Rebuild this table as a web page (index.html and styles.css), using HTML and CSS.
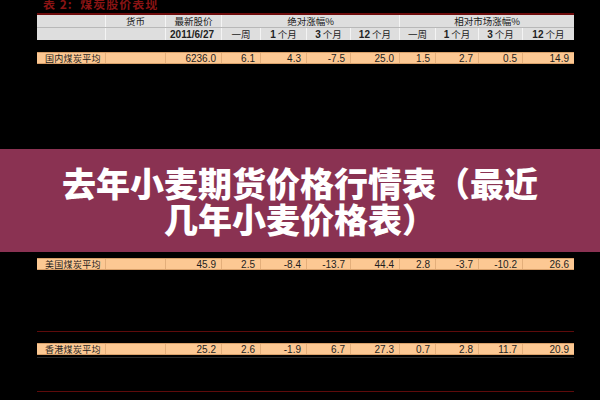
FILE: index.html
```html
<!DOCTYPE html>
<html lang="zh-CN">
<head>
<meta charset="utf-8">
<link rel="stylesheet" href="styles.css">
</head>
<body>
<div class="doc">
  <div class="title"><span>表 2:&nbsp; 煤炭股价表现</span></div>
  <div class="head">
    <div class="grid hrow r1">
      <div class="c"></div>
      <div class="c">货币</div>
      <div class="c">最新股价</div>
      <div class="c span4">绝对涨幅%</div>
      <div class="c span4">相对市场涨幅%</div>
    </div>
    <div class="grid hrow r2">
      <div class="c"></div>
      <div class="c"></div>
      <div class="c num"><b>2011/6/27</b></div>
      <div class="c">一周</div>
      <div class="c"><b>1</b> 个月</div>
      <div class="c"><b>3</b> 个月</div>
      <div class="c"><b>12</b> 个月</div>
      <div class="c">一周</div>
      <div class="c"><b>1</b> 个月</div>
      <div class="c"><b>3</b> 个月</div>
      <div class="c"><b>12</b> 个月</div>
    </div>
  </div>
  <div class="grid data first">
    <div class="c lbl">国内煤炭平均</div><div class="c"></div>
    <div class="c">6236.0</div><div class="c">6.1</div><div class="c">4.3</div><div class="c">-7.5</div><div class="c">25.0</div>
    <div class="c">1.5</div><div class="c">2.7</div><div class="c">0.5</div><div class="c">14.9</div>
  </div>
</div>
<div class="banner">
  <div class="line">去年小麦期货价格行情表（最近</div>
  <div class="line">几年小麦价格表）</div>
</div>
<div class="doc">
  <div class="grid data us">
    <div class="c lbl">美国煤炭平均</div><div class="c"></div>
    <div class="c">45.9</div><div class="c">2.5</div><div class="c">-8.4</div><div class="c">-13.7</div><div class="c">44.4</div>
    <div class="c">2.8</div><div class="c">-3.7</div><div class="c">-10.2</div><div class="c">26.6</div>
  </div>
  <div class="rule r-a"></div>
  <div class="grid data hk">
    <div class="c lbl">香港煤炭平均</div><div class="c"></div>
    <div class="c">25.2</div><div class="c">2.6</div><div class="c">-1.9</div><div class="c">6.7</div><div class="c">27.3</div>
    <div class="c">0.7</div><div class="c">2.8</div><div class="c">11.7</div><div class="c">20.9</div>
  </div>
  <div class="faint"></div>
  <div class="rule r-b"></div>
</div>
</body>
</html>
```

FILE: styles.css
```css
html, body {
  margin: 0;
  padding: 0;
}
body {
  background: #000;
  width: 600px;
  height: 400px;
  overflow: hidden;
  font-family: "Liberation Sans", "Noto Sans CJK SC", sans-serif;
  color: #1e1e1e;
}
.doc {
  margin-left: 37px;
  width: 537px;
}
.title {
  height: 13px;
  overflow: hidden;
  padding-left: 6px;
}
.title span {
  display: block;
  margin-top: -3px;
  font-family: "Noto Sans CJK SC", sans-serif;
  font-size: 12px;
  line-height: 14px;
  font-weight: 700;
  color: #8a1414;
  letter-spacing: 1px;
}
.grid {
  display: grid;
  grid-template-columns: 68px 60px 56px 39px 46px 44px 49px 36px 43px 44px 52px;
}
.head {
  background: #dedede;
  border-top: 2px solid #6e0c0c;
}
.hrow .c {
  height: 12px;
  line-height: 12px;
  text-align: center;
  font-family: "Noto Sans CJK SC", sans-serif;
  font-size: 9.5px;
  color: #222;
  border-left: 1px solid #f4f4f4;
  box-sizing: border-box;
}
.hrow .c:first-child {
  border-left: none;
}
.hrow .span4 {
  grid-column: span 4;
}
.r2 {
  border-top: 1px solid #b8b8b8;
}
.hrow .c b {
  font-family: "Liberation Sans", sans-serif;
  font-size: 10px;
}
.hrow .num {
  text-align: right;
  padding-right: 7px;
}
.data {
  background: #fcc893;
  border-top: 1px solid #d8a06a;
  border-bottom: 1px solid #d8a06a;
}
.data .c {
  height: 10px;
  line-height: 11px;
  font-size: 10px;
  text-align: right;
  padding-right: 5px;
  border-left: 1px solid #e3ae7a;
  color: #1e1e1e;
}
.data .c:first-child {
  border-left: none;
}
.data .lbl {
  text-align: left;
  padding-left: 8px;
  padding-right: 0;
  font-family: "Noto Sans CJK SC", sans-serif;
  font-size: 9px;
  letter-spacing: 0.3px;
}
.first {
  margin-top: 12px;
}
.banner {
  margin-top: 85px;
  height: 103px;
  box-sizing: border-box;
  padding-top: 16px;
  background: #8a3252;
  text-align: center;
}
.banner .line {
  height: 36px;
  font-family: "Noto Sans CJK SC", sans-serif;
  font-weight: 900;
  font-size: 34px;
  line-height: 36px;
  color: #fff;
}
.us {
  margin-top: 6px;
}
.rule {
  height: 1px;
  background: #5e0b0b;
}
.r-a {
  margin-top: 61px;
}
.hk {
  margin-top: 11px;
}
.faint {
  margin-top: 2px;
  height: 1px;
  background: #2a2a2a;
}
.r-b {
  margin-top: 33px;
}
```
